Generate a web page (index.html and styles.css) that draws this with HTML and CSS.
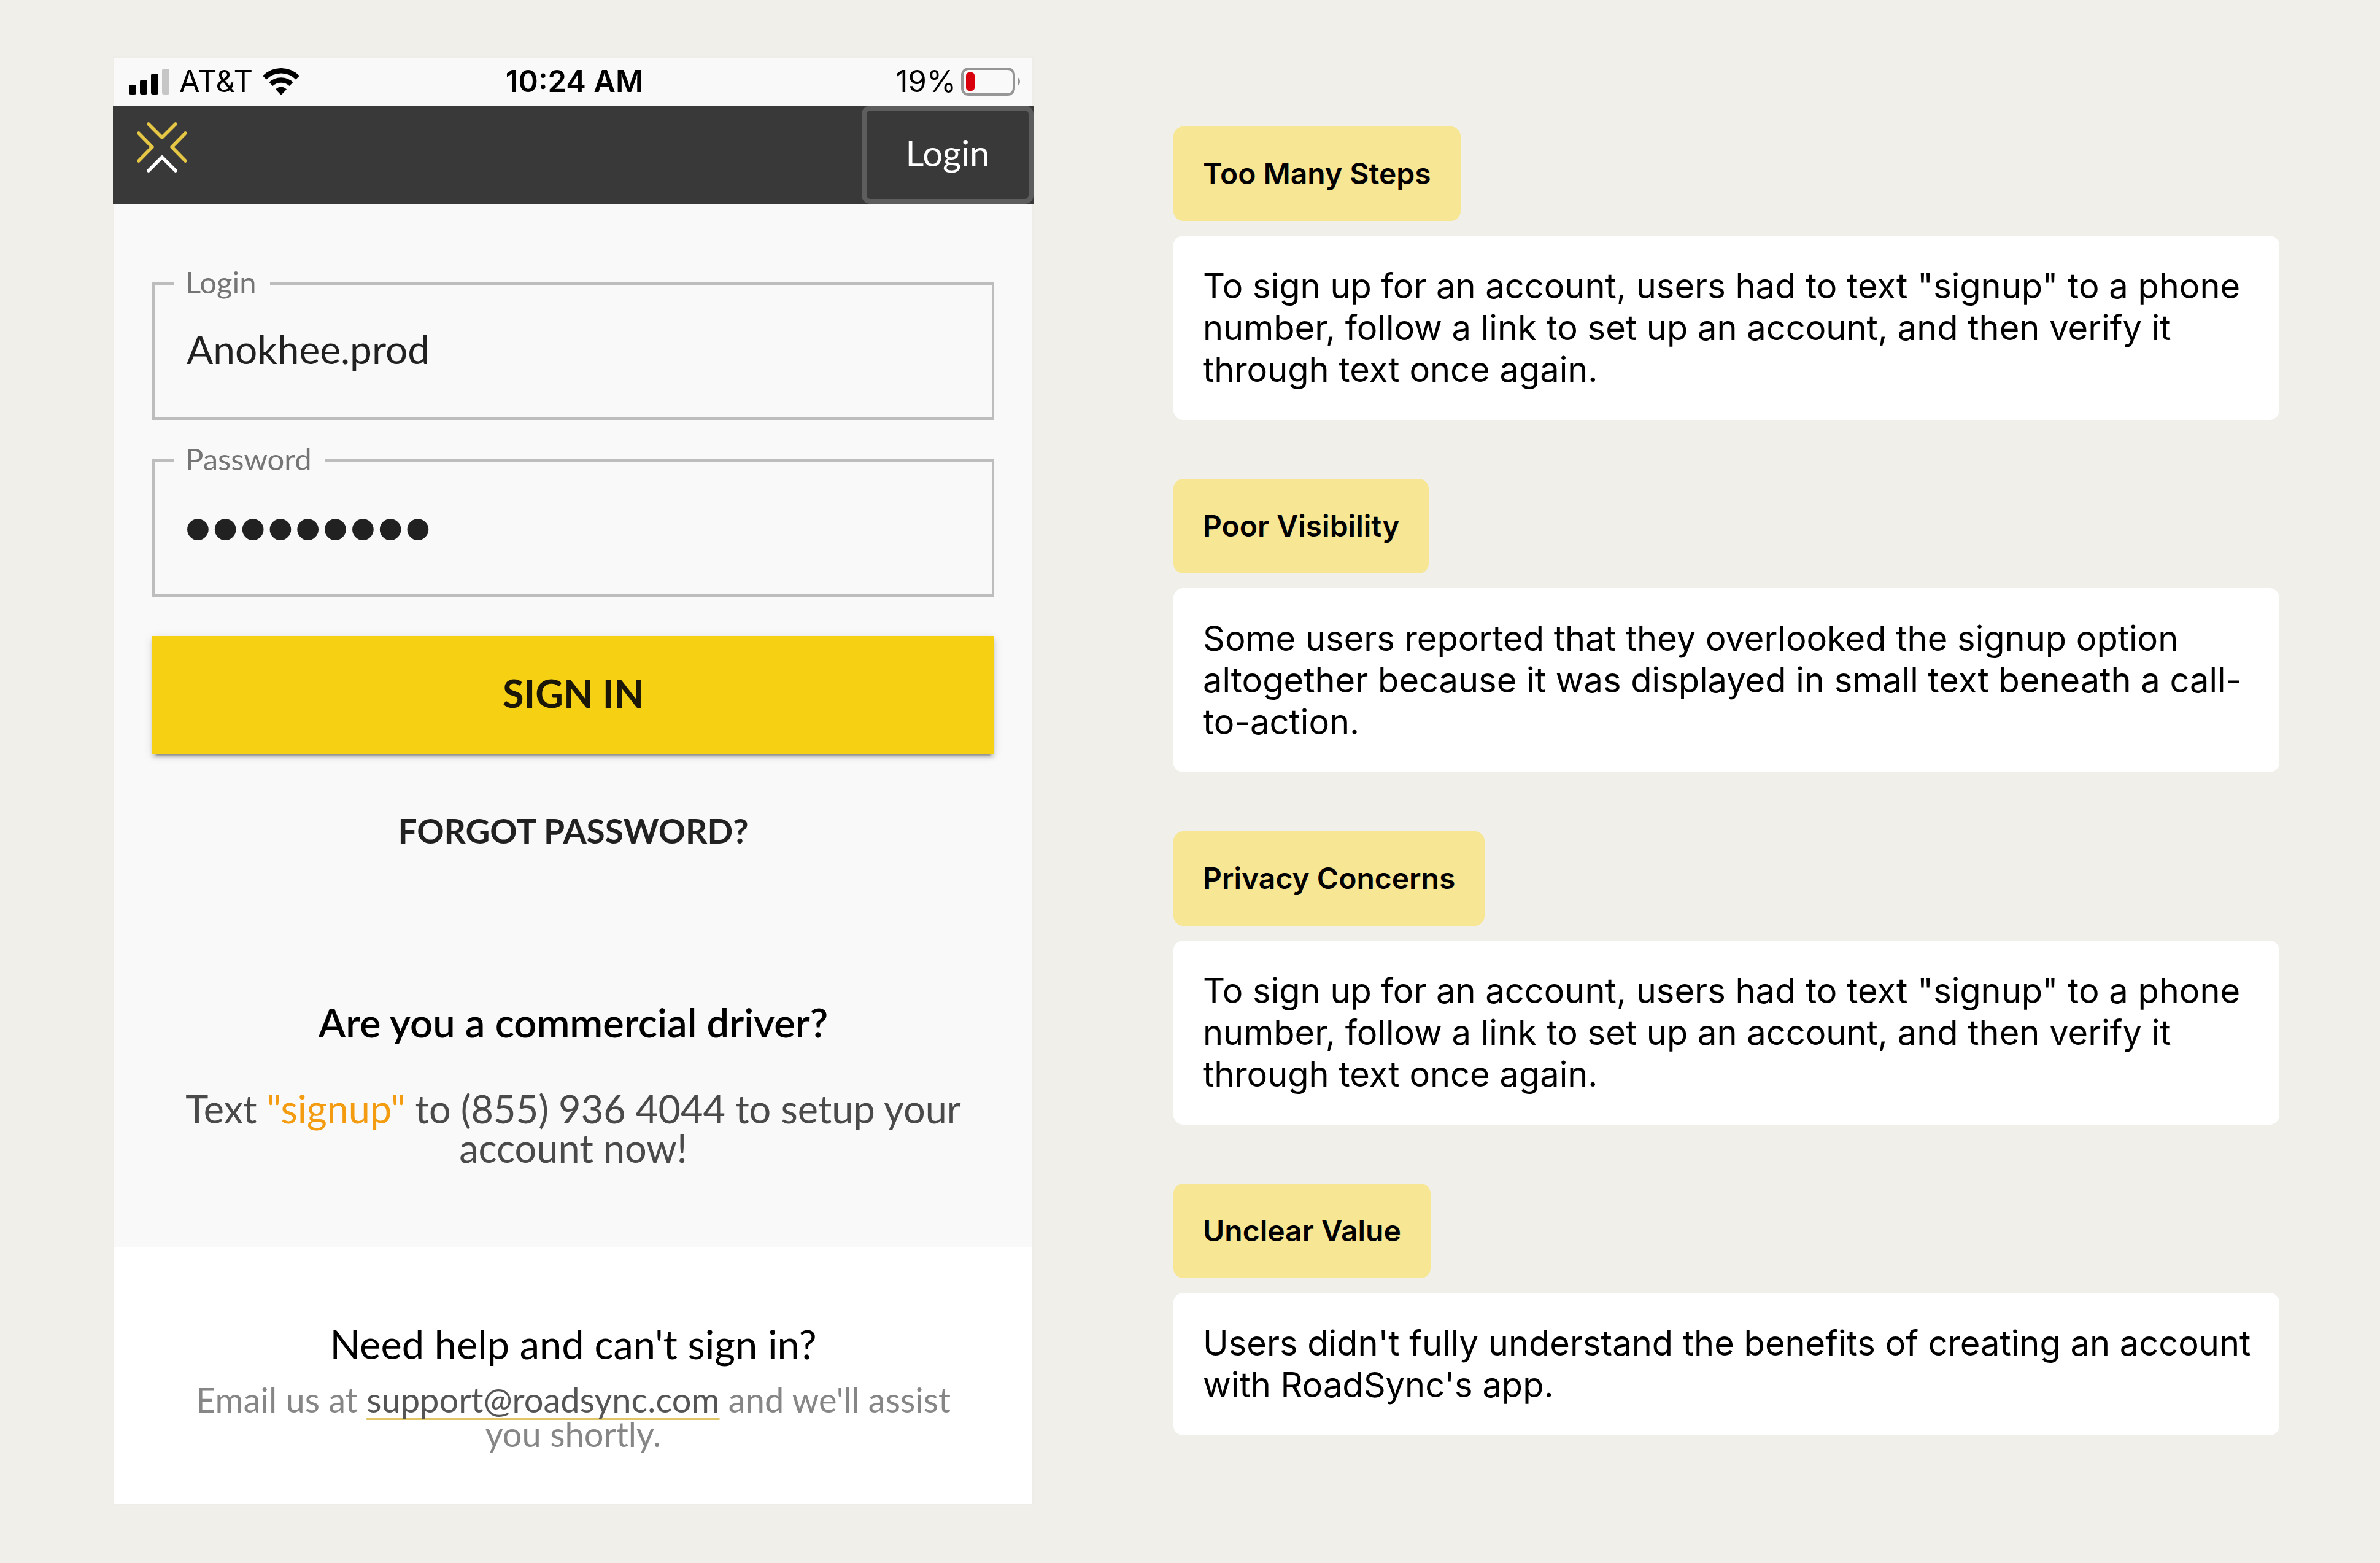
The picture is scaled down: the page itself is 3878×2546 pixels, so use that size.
FILE: index.html
```html
<!DOCTYPE html>
<html lang="en">
<head>
<meta charset="utf-8">
<meta name="viewport" content="width=device-width, initial-scale=1">
<title>RoadSync sign-in findings</title>
<link rel="stylesheet" href="styles.css">
</head>
<body>
<main class="board">
  <section class="phone" aria-label="Sign-in screen">
    <div class="status">
      <div class="status-left">
        <svg class="signal" viewBox="0 0 66 42" aria-hidden="true">
          <rect x="0" y="26" width="12" height="16" rx="3"/>
          <rect x="18" y="18" width="12" height="24" rx="3"/>
          <rect x="36" y="8" width="12" height="34" rx="3"/>
          <rect x="54" y="0" width="12" height="42" rx="3" fill="#c6c6c6"/>
        </svg>
        <span>AT&amp;T</span>
        <svg class="wifi" viewBox="0 0 60 44" aria-hidden="true">
          <path d="M3 15.500A38 38 0 0 1 57 15.500" fill="none" stroke="#000" stroke-width="8.500"/>
          <path d="M13.500 26A24 24 0 0 1 46.500 26" fill="none" stroke="#000" stroke-width="8.500"/>
          <path d="M21 34.500Q30 26.500 39 34.500L30 44Z"/>
        </svg>
      </div>
      <span class="time">10:24 AM</span>
      <div class="status-right">
        <span>19%</span>
        <svg class="battery" viewBox="0 0 96 46" aria-hidden="true">
          <rect x="2" y="2" width="84" height="42" rx="10" fill="none" stroke="#969696" stroke-width="4"/>
          <rect x="8" y="8" width="14" height="30" rx="5" fill="#d9000d"/>
          <path d="M92 16Q96 18 96 23T92 30Z" fill="#969696"/>
        </svg>
      </div>
    </div>

    <header class="bar">
      <svg class="logo" viewBox="0 0 88 88" role="img" aria-label="RoadSync">
        <g fill="none" stroke="#e5c645" stroke-width="5.500" stroke-linecap="round" stroke-linejoin="round">
          <path d="M22 6L44 28L66 6"/>
          <path d="M6 21L28 43.500L6 66"/>
          <path d="M82 21L60 43.500L82 66"/>
          <path d="M22 82L44 60L66 82" stroke="#fff"/>
        </g>
      </svg>
      <button class="login" type="button">Login</button>
    </header>

    <form class="signin">
      <fieldset class="field">
        <legend><label for="user">Login</label></legend>
        <input id="user" type="text" value="Anokhee.prod">
      </fieldset>
      <fieldset class="field">
        <legend><label for="pass">Password</label></legend>
        <input id="pass" type="password" value="roadsync1">
      </fieldset>
      <button class="submit" type="button">SIGN IN</button>
      <a class="forgot" href="#forgot">FORGOT PASSWORD?</a>
      <h2 class="driver">Are you a commercial driver?</h2>
      <p class="driver-copy">Text <span class="keyword">"signup"</span> to (855) 936 4044 to setup your account now!</p>
    </form>

    <footer class="help">
      <h2>Need help and can't sign in?</h2>
      <p>Email us at <a href="mailto:support@roadsync.com">support@roadsync.com</a> and we'll assist you shortly.</p>
    </footer>
  </section>

  <section class="notes" aria-label="Findings">
    <article class="note">
      <h3>Too Many Steps</h3>
      <p>To sign up for an account, users had to text "signup" to a phone number, follow a link to set up an account, and then verify it through text once again.</p>
    </article>
    <article class="note">
      <h3>Poor Visibility</h3>
      <p>Some users reported that they overlooked the signup option altogether because it was displayed in small text beneath a call-to-action.</p>
    </article>
    <article class="note">
      <h3>Privacy Concerns</h3>
      <p>To sign up for an account, users had to text "signup" to a phone number, follow a link to set up an account, and then verify it through text once again.</p>
    </article>
    <article class="note">
      <h3>Unclear Value</h3>
      <p>Users didn't fully understand the benefits of creating an account with RoadSync's app.</p>
    </article>
  </section>
</main>
</body>
</html>
```
FILE: styles.css
```css
* { box-sizing: border-box; }

body {
  margin: 0;
  background: #f0efea;
  color: #000;
  font-family: Inter, sans-serif;
}

h2, h3, p { margin: 0; }

.board {
  display: grid;
  grid-template-columns: 1500fr 1802fr;
  gap: 228px;
  align-items: start;
  padding: 92px 164px 94px 184px;
}

/* Phone screen */
.phone {
  border: 2px solid #eeede8;
  background: #f9f9f9;
  font-family: Lato, sans-serif;
}

.status {
  display: grid;
  grid-template-columns: 1fr auto 1fr;
  align-items: center;
  height: 78px;
  padding: 0 20px 0 24px;
  font-family: Inter, sans-serif;
  font-size: 49px;
  line-height: 78px;
}

.status-left, .status-right {
  display: flex;
  align-items: center;
}
.status-left { gap: 16px; }
.status-right { justify-content: flex-end; gap: 8px; }
.time { font-weight: 600; }
.signal { width: 66px; height: 42px; }
.wifi { width: 60px; height: 44px; }
.battery { width: 96px; height: 46px; }

.bar {
  display: flex;
  justify-content: space-between;
  align-items: flex-start;
  margin: 0 -2px;
  background: #393939;
}
.logo { width: 88px; height: 88px; margin: 24px 36px; }

.login {
  width: 280px;
  height: 160px;
  padding: 0 0 8px;
  border: 8px solid #5d5d5d;
  border-radius: 14px;
  background: #393939;
  color: #fff;
  font-family: inherit;
  font-size: 58px;
}

.signin {
  display: flex;
  flex-direction: column;
  padding: 100px 62px 130px;
}

.field {
  min-width: 0;
  margin: 0 0 36px;
  padding: 0;
  border: 4px solid #bdbdbd;
}
.field legend {
  margin-left: 32px;
  padding: 0 22px 6px 18px;
  color: #757575;
  font-size: 49px;
  line-height: 54px;
}
.field input {
  display: block;
  width: 100%;
  height: 188px;
  padding: 0 52px 36px;
  border: 0;
  outline: 0;
  background: transparent;
  color: #212121;
  font-family: inherit;
  font-size: 64px;
}
.field input[type="password"] {
  padding: 0 48px 28px;
  font-family: "Liberation Sans", sans-serif;
  font-size: 128px;
}

.submit {
  height: 192px;
  margin-top: 28px;
  padding: 0 0 8px;
  border: 0;
  background: #f5d013;
  box-shadow: 0 9px 3px -6px rgba(0, 0, 0, .3), 0 6px 6px 0 rgba(0, 0, 0, .14), 0 3px 15px 0 rgba(0, 0, 0, .12);
  color: #1a1708;
  font-family: inherit;
  font-size: 63px;
  font-weight: 700;
}

.forgot {
  align-self: center;
  margin-top: 93px;
  color: #212121;
  font-size: 55px;
  font-weight: 700;
  line-height: 64px;
  text-decoration: none;
}

.driver {
  margin-top: 248px;
  font-size: 65px;
  font-weight: 600;
  line-height: 64px;
  text-align: center;
}
.driver-copy {
  margin-top: 77px;
  padding: 0 48px;
  color: #4a4a4a;
  font-size: 63px;
  line-height: 64px;
  text-align: center;
}
.keyword { color: #f39c12; }

.help {
  padding: 125px 120px 86px;
  background: #fff;
  text-align: center;
}
.help h2 {
  font-size: 65px;
  font-weight: 400;
  line-height: 64px;
}
.help p {
  margin-top: 31px;
  color: #868686;
  font-size: 56px;
  line-height: 56px;
}
.help a {
  display: inline-block;
  color: #555;
  text-decoration: underline 4px #dfc565;
  text-decoration-skip-ink: none;
  text-underline-offset: 8px;
}

/* Findings */
.notes {
  display: flex;
  flex-direction: column;
  gap: 96px;
  padding-top: 114px;
}
.note {
  display: flex;
  flex-direction: column;
  align-items: flex-start;
  gap: 24px;
}
.note h3 {
  padding: 48px;
  border-radius: 16px;
  background: #f7e694;
  font-size: 48px;
  font-weight: 600;
  line-height: 58px;
}
.note p {
  width: 100%;
  padding: 48px 36px 48px 48px;
  border-radius: 16px;
  background: #fff;
  font-size: 56px;
  line-height: 68px;
}
```
